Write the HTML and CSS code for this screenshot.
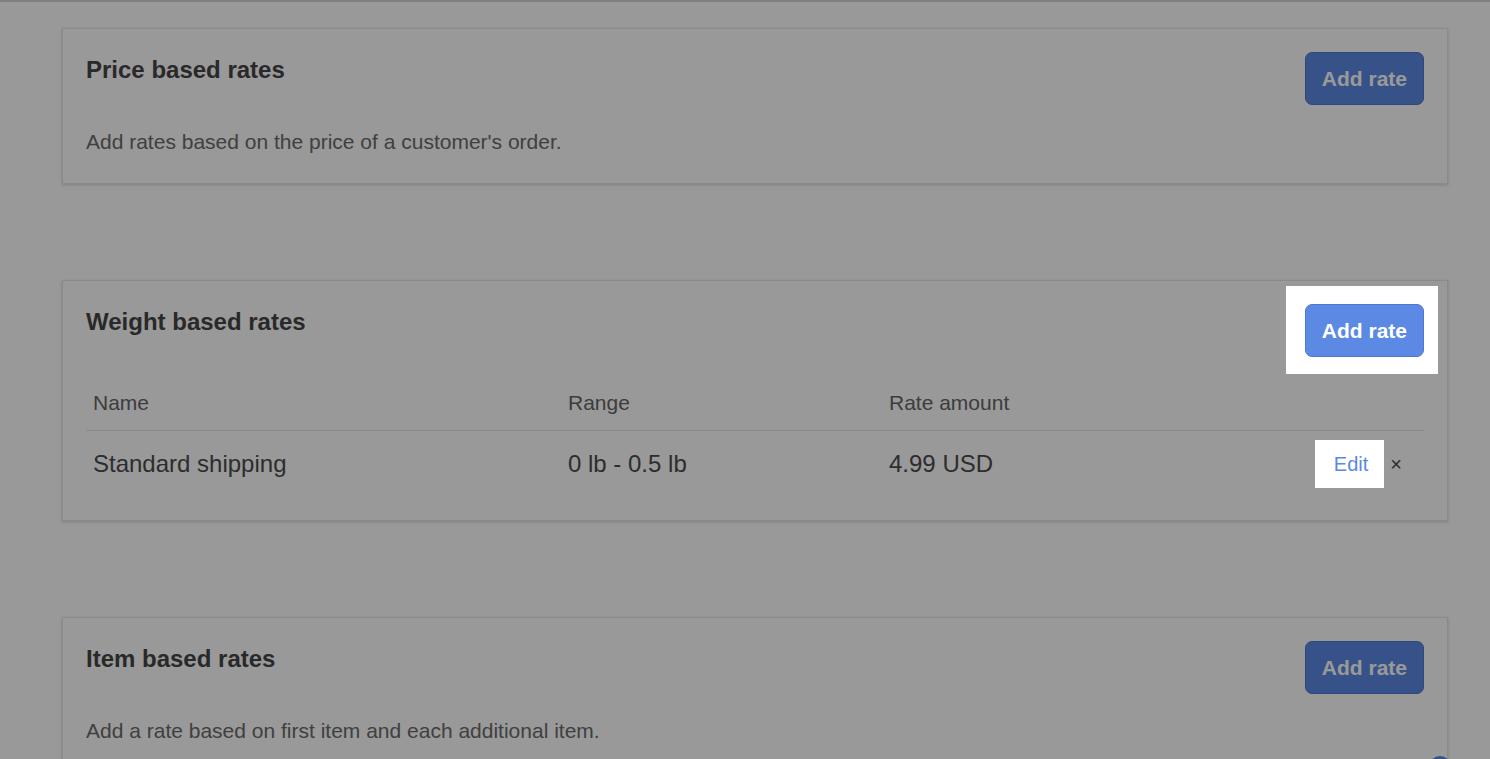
FILE: index.html
```html
<!DOCTYPE html>
<html lang="en">
<head>
<meta charset="utf-8">
<title>Shipping rates</title>
<link rel="stylesheet" href="styles.css">
</head>
<body>
<div class="topline"></div>
<main class="page">
  <section class="card">
    <div class="card-head">
      <h2 class="card-title">Price based rates</h2>
      <button class="btn">Add rate</button>
    </div>
    <p class="card-desc">Add rates based on the price of a customer's order.</p>
  </section>

  <section class="card card-table">
    <div class="card-head">
      <h2 class="card-title">Weight based rates</h2>
      <div class="spot spot-btn"><button class="btn">Add rate</button></div>
    </div>
    <div class="rates">
      <div class="rates-row rates-head">
        <div class="cell">Name</div>
        <div class="cell">Range</div>
        <div class="cell">Rate amount</div>
        <div class="cell"></div>
      </div>
      <div class="rates-row rates-body">
        <div class="cell">Standard shipping</div>
        <div class="cell">0 lb - 0.5 lb</div>
        <div class="cell">4.99 USD</div>
        <div class="cell actions">
          <a class="spot edit" href="#">Edit</a>
          <span class="remove">&times;</span>
        </div>
      </div>
    </div>
  </section>

  <section class="card card-last">
    <div class="card-head">
      <h2 class="card-title">Item based rates</h2>
      <button class="btn">Add rate</button>
    </div>
    <p class="card-desc">Add a rate based on first item and each additional item.</p>
    <span class="beacon"></span>
  </section>
</main>
<div class="overlay"></div>
</body>
</html>
```

FILE: styles.css
```css
html, body {
  margin: 0;
  padding: 0;
  overflow: hidden;
  height: 100%;
}
body {
  background: #ffffff;
  font-family: "Liberation Sans", Arial, sans-serif;
  color: #444;
}
.topline {
  height: 2px;
  background: #d6d6d6;
}
.page {
  padding: 26px 42px 0 62px;
}
.card {
  position: relative;
  background: #ffffff;
  border: 1px solid #e6e6e6;
  box-shadow: 0 1px 3px rgba(0, 0, 0, 0.18);
  padding: 23px 23px 26px;
  margin-bottom: 96px;
}
.card-table {
  padding-bottom: 24px;
}
.card-head {
  display: flex;
  justify-content: space-between;
  align-items: flex-start;
}
.card-title {
  margin: 0;
  font-size: 24px;
  line-height: 36px;
  font-weight: bold;
  color: #454545;
}
.btn {
  height: 53px;
  padding: 0 16px;
  border: 1px solid #4f78cc;
  border-radius: 7px;
  background: #5c89e4;
  color: #ffffff;
  font-family: "Liberation Sans", Arial, sans-serif;
  font-size: 21px;
  font-weight: bold;
  cursor: pointer;
}
.card-desc {
  margin: 22px 0 0;
  font-size: 21px;
  line-height: 30px;
  color: #6b6b6b;
}
.rates {
  margin-top: 19px;
}
.rates-row {
  display: grid;
  grid-template-columns: 475px 321px 1fr auto;
  align-items: center;
}
.rates-head {
  height: 54px;
  border-bottom: 1px solid #e2e3ec;
  font-size: 21px;
  color: #666;
}
.rates-body {
  height: 65px;
  font-size: 24px;
  color: #4c4c4c;
}
.cell {
  padding-left: 7px;
  line-height: 30px;
}
.actions {
  display: flex;
  align-items: center;
  justify-content: flex-end;
  padding-right: 22px;
  gap: 6px;
}
.edit {
  display: block;
  padding: 9px 16px 9px 19px;
  font-size: 20px;
  line-height: 30px;
  color: #5b88e3;
  text-decoration: none;
}
.remove {
  font-size: 20px;
  line-height: 30px;
  color: #4a4a4a;
}
.overlay {
  position: fixed;
  inset: 0;
  background: rgba(0, 0, 0, 0.4);
  z-index: 10;
}
.spot {
  position: relative;
  z-index: 20;
  background: #ffffff;
}
.spot-btn {
  display: flex;
  background: transparent;
}
.spot-btn::before {
  content: "";
  position: absolute;
  top: -18px;
  left: -19px;
  right: -14px;
  bottom: -17px;
  background: #ffffff;
  z-index: -1;
}
.beacon {
  position: absolute;
  right: -4px;
  top: 138px;
  width: 22px;
  height: 22px;
  border-radius: 50%;
  background: #5c89e4;
}
```
